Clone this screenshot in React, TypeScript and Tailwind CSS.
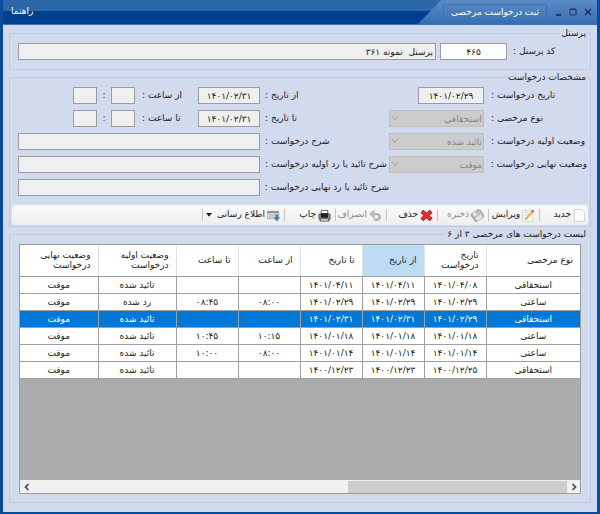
import { Fragment, type ReactNode } from "react";
import clsx from "clsx";

const box = "h-[17px] min-w-0 border border-[#9a9ca3] bg-[#efefef] px-1 text-[9px] text-[#222]";

const columns = [
  { title: "نوع مرخصی", width: "w-[94px]" },
  { title: "تاریخ درخواست", width: "w-[62px]" },
  { title: "از تاریخ", width: "w-[62px]", active: true },
  { title: "تا تاریخ", width: "w-[62px]" },
  { title: "از ساعت", width: "w-[62px]" },
  { title: "تا ساعت", width: "w-[62px]" },
  { title: "وضعیت اولیه درخواست", width: "w-[78px]" },
  { title: "وضعیت نهایی درخواست", width: "w-[78px]" },
];

const rows = [
  ["استحقاقی", "۱۴۰۱/۰۴/۰۸", "۱۴۰۱/۰۴/۱۱", "۱۴۰۱/۰۴/۱۱", "", "", "تائید شده", "موقت"],
  ["ساعتی", "۱۴۰۱/۰۲/۲۹", "۱۴۰۱/۰۲/۲۹", "۱۴۰۱/۰۲/۲۹", "۰۸:۰۰", "۰۸:۴۵", "رد شده", "موقت"],
  ["استحقاقی", "۱۴۰۱/۰۲/۲۹", "۱۴۰۱/۰۲/۳۱", "۱۴۰۱/۰۲/۳۱", "", "", "تائید شده", "موقت"],
  ["ساعتی", "۱۴۰۱/۰۱/۱۸", "۱۴۰۱/۰۱/۱۸", "۱۴۰۱/۰۱/۱۸", "۱۰:۱۵", "۱۰:۴۵", "تائید شده", "موقت"],
  ["ساعتی", "۱۴۰۱/۰۱/۱۴", "۱۴۰۱/۰۱/۱۴", "۱۴۰۱/۰۱/۱۴", "۰۸:۰۰", "۱۰:۰۰", "تائید شده", "موقت"],
  ["استحقاقی", "۱۴۰۰/۱۲/۲۵", "۱۴۰۰/۱۲/۲۳", "۱۴۰۰/۱۲/۲۳", "", "", "تائید شده", "موقت"],
];

const selectedRow = 2;

const icons = {
  create: <path d="M1.5.5h8l3 3v10h-11z" fill="#fbfbfb" stroke="#d3d3d6" />,
  edit: (
    <>
      <path d="M.5 1.5h11v12H.5z" fill="#fdfdfd" stroke="#cfd3d8" />
      <path d="M2 4h6M2 6.5h5M2 9h3" stroke="#ccd6e2" />
      <path d="M3.5 11.5 11 3" stroke="#f2b93b" strokeWidth="2.4" />
      <path d="m10.5 3.5 2-2.3" stroke="#df6a4c" strokeWidth="2.4" />
    </>
  ),
  save: (
    <g transform="rotate(-35 7 7)">
      <path d="M1.5 2h9l2 2v8h-11z" fill="#bdbdbd" stroke="#9c9c9c" />
      <path d="M4 2h5v4H4z" fill="#ececec" />
      <path d="M7 3h1.5v2H7z" fill="#8a8a8a" />
      <path d="M3.5 8h7v4h-7z" fill="#e4e4e4" />
    </g>
  ),
  remove: (
    <>
      <path d="m2 2.5 10 9M12 2.500l-10 9" stroke="#a91414" strokeWidth="4.4" />
      <path d="m2.5 3 9 8M11.5 3l-9 8" stroke="#ea2a2e" strokeWidth="3.2" />
    </>
  ),
  undo: (
    <>
      <path d="M4 5.5h4.500a3 3 0 0 1 0 6H5.500" stroke="#b4b4b4" strokeWidth="2.6" />
      <path d="M.5 5.5 5.500 1v9z" fill="#c0c0c0" stroke="#a9a9a9" strokeWidth=".6" />
    </>
  ),
  print: (
    <>
      <path d="M3.5 1.5h7v4h-7z" fill="#fff" stroke="#555" />
      <path d="M1 5.5h12V11H1z" fill="#999" stroke="#555" />
      <path d="M3 4.5h8v5H3z" fill="#222" />
      <path d="M3 10.5h8l1 2.5H2z" fill="#eee" stroke="#555" />
    </>
  ),
  notify: (
    <>
      <path d="M.5 2.5h12v8H.5z" fill="#dfe2e4" stroke="#a7abae" />
      <path d="M.5 3.5h12" stroke="#858b90" strokeWidth="2" />
      <path d="M2 6.5h8M2 8.5h5" stroke="#aaa" />
      <path d="M9 6h3v3h2l-3.500 4.500L7 9h2z" fill="#3b86b8" />
    </>
  ),
};

const actions: { icon: keyof typeof icons; label: string; width: string; disabled?: boolean }[] = [
  { icon: "create", label: "جدید", width: "w-[46px]" },
  { icon: "edit", label: "ویرایش", width: "w-[46px]" },
  { icon: "save", label: "ذخیره", width: "w-[46px]", disabled: true },
  { icon: "remove", label: "حذف", width: "w-[46px]" },
  { icon: "undo", label: "انصراف", width: "w-[46px]", disabled: true },
  { icon: "print", label: "چاپ", width: "w-[46px]" },
  { icon: "notify", label: "اطلاع رسانی", width: "w-[77px]" },
];

function Group({ title, className, children }: { title: string; className?: string; children: ReactNode }) {
  return (
    <fieldset className={clsx("min-w-0 border border-[#bccbe4]", className)}>
      <legend className="ms-[2px] h-[14px] px-[2px] text-[9px] leading-[14px]">{title}</legend>
      {children}
    </fieldset>
  );
}

function Label({ id, children }: { id: string; children: ReactNode }) {
  return (
    <label htmlFor={id} className="text-end leading-[17px] whitespace-nowrap">
      {children} :
    </label>
  );
}

function StatusSelect({ id, value }: { id: string; value: string }) {
  return (
    <div className="relative h-[17px]">
      <select
        id={id}
        disabled
        className="h-full w-full appearance-none border border-[#bfbfbf] bg-[#cccccc] ps-px text-[9px] leading-[14px] text-[#858585] opacity-100"
      >
        <option>{value}</option>
      </select>
      <svg viewBox="0 0 8 8" className="pointer-events-none absolute top-1 left-[2px] size-2" fill="none" stroke="#a3a3a3">
        <path d="m1 2 3 3.500L7 2" />
      </svg>
    </div>
  );
}

function PeriodRow({ id, prefix }: { id: string; prefix: string }) {
  return (
    <>
      <Label id={`${id}-date`}>{`${prefix} تاریخ`}</Label>
      <div className="flex">
        <input id={`${id}-date`} readOnly defaultValue="۱۴۰۱/۰۲/۳۱" className={clsx(box, "w-[62px] text-center")} />
        <div className="me-[7px] w-[56px] text-end leading-[17px] whitespace-nowrap">
          <label htmlFor={`${id}-minute`}>{prefix} ساعت :</label>
        </div>
        <input id={`${id}-minute`} readOnly className={clsx(box, "w-6")} />
        <span className="w-[14px] text-center leading-[17px]">:</span>
        <input aria-label={`${prefix} ساعت`} readOnly className={clsx(box, "w-6")} />
      </div>
    </>
  );
}

function TitleBar() {
  return (
    <header className="flex h-[25px] items-stretch justify-between border-b border-[#3d74b4] bg-linear-to-b from-[#2b68aa] from-45% to-[#00408e] to-45% text-white">
      <div className="flex w-[179px] items-center gap-[7px] bg-linear-to-b from-[#5b8cc5] to-[#386fb0] ps-[5px] [clip-path:polygon(13%_0,100%_0,100%_100%,0_100%)]">
        <button aria-label="بستن" className="text-[#292c70]">
          <svg viewBox="0 0 8 8" className="size-2" stroke="currentColor" strokeWidth="1.5">
            <path d="m1 1 6 6M7 1 1 7" />
          </svg>
        </button>
        <button aria-label="بزرگ نمایی" className="text-[#292c70]">
          <svg viewBox="0 0 8 8" className="size-2" fill="none" stroke="currentColor">
            <path d="M1 1h6v6H1z" />
            <path d="M1 1.5h6" />
          </svg>
        </button>
        <button aria-label="کوچک نمایی" className="text-[#1d2168]">
          <svg viewBox="0 0 8 8" className="size-2" stroke="currentColor" strokeWidth="1.5">
            <path d="M2 7h5" />
          </svg>
        </button>
        <h1 className="h-4 w-[104px] rounded-[2px] border border-[#3a72b4] text-center text-[9px] leading-[14px] whitespace-nowrap">
          ثبت درخواست مرخصی
        </h1>
      </div>
      <button className="px-2 text-[9px]">راهنما</button>
    </header>
  );
}

function Toolbar() {
  return (
    <div
      role="toolbar"
      className="mx-[2px] mt-[9px] flex h-[20px] items-center rounded-sm bg-linear-to-b from-[#fafafa] to-[#eeeeee] ps-[2px]"
    >
      {actions.map((action) => (
        <Fragment key={action.label}>
          <button
            disabled={action.disabled}
            className={clsx(
              "flex h-full items-center gap-[2px] whitespace-nowrap",
              action.width,
              action.disabled && "text-[#8c8c8c]"
            )}
          >
            <svg viewBox="0 0 14 14" className="size-[13px] shrink-0" fill="none">
              {icons[action.icon]}
            </svg>
            {action.label}
            {action.icon === "notify" && (
              <svg viewBox="0 0 6 4" className="ms-auto me-[3px] h-1 w-[6px]" fill="#111">
                <path d="M0 0h6L3 3.500z" />
              </svg>
            )}
          </button>
          <span className="me-1 h-3 w-px shrink-0 bg-[#c4c4c4]" />
        </Fragment>
      ))}
    </div>
  );
}

function RequestsTable() {
  return (
    <div className="flex min-h-[250px] flex-col border border-[#9b9b9b] bg-[#ababab]">
      <table className="w-full table-fixed border-collapse bg-white">
        <thead>
          <tr className="h-[31px]">
            {columns.map((column) => (
              <th
                key={column.title}
                className={clsx(
                  "border-e border-b border-e-[#e2e2e2] border-b-[#a0a0a0] ps-[7px] pe-2 text-start leading-[10px] font-normal last:border-e-0",
                  column.width,
                  column.active && "bg-[#bcdcf4]"
                )}
              >
                {column.title}
              </th>
            ))}
          </tr>
        </thead>
        <tbody>
          {rows.map((row, i) => (
            <tr key={i} className={clsx("h-[17px]", i === selectedRow && "bg-[#0078d7] text-white")}>
              {row.map((cell, j) => (
                <td
                  key={j}
                  className="border-e border-b border-[#a0a0a0] p-0 text-center leading-4 whitespace-nowrap last:border-e-0"
                >
                  {cell}
                </td>
              ))}
            </tr>
          ))}
        </tbody>
      </table>
      <div className="mt-auto flex h-[13px] items-center bg-[#f0f0f0]">
        <button aria-label="راست" className="flex w-[13px] justify-center">
          <svg viewBox="0 0 8 8" className="size-2" fill="none" stroke="#444" strokeWidth="1.6">
            <path d="m2.500 1 3 3-3 3" />
          </svg>
        </button>
        <div className="h-[12px] flex-1">
          <div className="h-full w-[41%] bg-[#cdcdcd]" />
        </div>
        <button aria-label="چپ" className="flex w-[13px] justify-center">
          <svg viewBox="0 0 8 8" className="size-2" fill="none" stroke="#444" strokeWidth="1.6">
            <path d="m5.500 1-3 3 3 3" />
          </svg>
        </button>
      </div>
    </div>
  );
}

export default function App() {
  return (
    <div
      dir="rtl"
      className="flex min-h-screen flex-col border-x-3 border-b-3 border-[#0a4c9c] bg-[#d2daee] font-['DejaVu_Sans',sans-serif] text-[9px] text-[#222]"
    >
      <TitleBar />
      <main className="flex flex-1 flex-col px-[6px] pt-px pb-[9px]">
        <Group title="پرسنل" className="pb-[9px]">
          <div className="flex gap-1 ps-[4px] pe-2 pt-[3px]">
            <div className="me-[2px] w-[73px] text-end leading-[17px]">
              <label htmlFor="code">کد پرسنل :</label>
            </div>
            <input id="code" defaultValue="۴۶۵" className={clsx(box, "w-[67px] bg-white text-center")} />
            <input
              aria-label="نام پرسنل"
              readOnly
              defaultValue="پرسنل  نمونه ۳۶۱"
              className={clsx(box, "flex-1 px-[2px]")}
            />
          </div>
        </Group>

        <Group title="مشخصات درخواست" className="pb-px">
          <div className="flex ps-[3px] pe-2 pt-[3px]">
            <div className="grid grid-cols-[96px_95px] content-start gap-x-[7px] gap-y-[6px]">
              <Label id="request-date">تاریخ درخواست</Label>
              <input
                id="request-date"
                readOnly
                defaultValue="۱۴۰۱/۰۲/۲۹"
                className={clsx(box, "w-[66px] text-center")}
              />
              <Label id="type">نوع مرخصی</Label>
              <StatusSelect id="type" value="استحقاقی" />
              <Label id="first-status">وضعیت اولیه درخواست</Label>
              <StatusSelect id="first-status" value="تائید شده" />
              <Label id="final-status">وضعیت نهایی درخواست</Label>
              <StatusSelect id="final-status" value="موقت" />
            </div>
            <div className="grid flex-1 grid-cols-[124px_1fr] gap-x-[5px] gap-y-[6px]">
              <PeriodRow id="from" prefix="از" />
              <PeriodRow id="to" prefix="تا" />
              <Label id="note">شرح درخواست</Label>
              <input id="note" readOnly className={box} />
              <Label id="first-note">شرح تائید یا رد اولیه درخواست</Label>
              <input id="first-note" readOnly className={box} />
              <Label id="final-note">شرح تائید یا رد نهایی درخواست</Label>
              <input id="final-note" readOnly className={box} />
            </div>
          </div>
          <Toolbar />
        </Group>

        <Group title="لیست درخواست های مرخصی ۳ از ۶" className="flex-1">
          <div className="px-[9px] pt-[3px] pb-2">
            <RequestsTable />
          </div>
        </Group>
      </main>
    </div>
  );
}
